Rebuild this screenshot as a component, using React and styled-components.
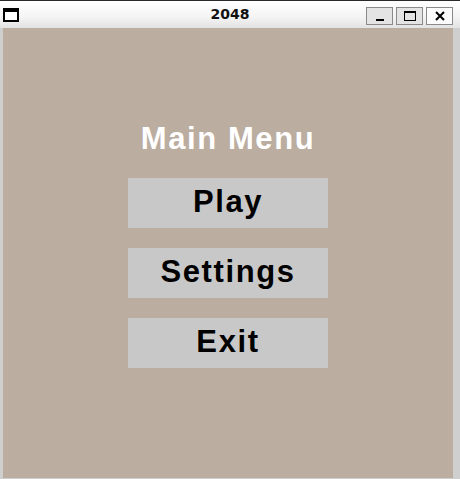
import React from "react";
import styled, { createGlobalStyle } from "styled-components";

const GlobalStyle = createGlobalStyle`
  html, body {
    margin: 0;
    padding: 0;
    background: #cfcfcf;
  }
`;

const menuItems = ["Play", "Settings", "Exit"];

const App = () => {
  return (
    <>
      <GlobalStyle />
      <Window>
        <TitleBar>
          <AppIcon />
          <WindowTitle>2048</WindowTitle>
          <Controls>
            <CtrlButton>
              <svg width="12" height="12" viewBox="0 0 12 12">
                <rect x="2" y="9" width="8" height="2" fill="#000" />
              </svg>
            </CtrlButton>
            <CtrlButton>
              <svg width="14" height="12" viewBox="0 0 14 12">
                <rect x="1.5" y="1.5" width="11" height="9" fill="none" stroke="#000" />
                <rect x="1" y="1" width="12" height="2" fill="#000" />
              </svg>
            </CtrlButton>
            <CtrlButton $light>
              <svg width="12" height="12" viewBox="0 0 12 12">
                <path d="M2 2 L10 10 M10 2 L2 10" stroke="#000" strokeWidth="2" />
              </svg>
            </CtrlButton>
          </Controls>
        </TitleBar>
        <Body>
          <Heading>Main Menu</Heading>
          <Menu>
            {menuItems.map((item) => (
              <MenuButton key={item}>{item}</MenuButton>
            ))}
          </Menu>
        </Body>
      </Window>
    </>
  );
};

export default App;

const Window = styled.div`
  width: 460px;
  height: 479px;
  display: flex;
  flex-direction: column;
  box-sizing: border-box;
  border-top: 1px solid #2a2a2a;
  background: #cfcfcf;
  font-family: "DejaVu Sans", sans-serif;
`;

const TitleBar = styled.div`
  height: 27px;
  display: flex;
  align-items: center;
  position: relative;
  padding: 0 7px 0 3px;
  background: linear-gradient(#ffffff, #f4f4f4 60%, #e2e2e2);
`;

const AppIcon = styled.div`
  width: 12px;
  height: 8px;
  border: 2px solid #000;
  border-top-width: 4px;
  background: #fff;
  margin-top: 1px;
`;

const WindowTitle = styled.div`
  position: absolute;
  left: 0;
  right: 0;
  top: 5px;
  text-align: center;
  font-size: 14px;
  font-weight: bold;
  color: #111;
  pointer-events: none;
`;

const Controls = styled.div`
  margin-left: auto;
  display: flex;
  gap: 3px;
  margin-top: 2px;
`;

const CtrlButton = styled.div`
  width: 25px;
  height: 16px;
  box-sizing: content-box;
  border: 1px solid #8a8a8a;
  background: ${(p) => (p.$light ? "#fbfbfb" : "#e4e4e4")};
  display: flex;
  align-items: center;
  justify-content: center;
`;

const Body = styled.div`
  flex: 1;
  margin: 0 7px 1px 3px;
  background: #bbada0;
  display: flex;
  flex-direction: column;
  align-items: center;
`;

const Heading = styled.h1`
  margin: 93px 0 21px;
  height: 36px;
  line-height: 36px;
  font-family: "Liberation Sans", Arial, sans-serif;
  font-size: 31px;
  font-weight: bold;
  letter-spacing: 1.6px;
  color: #ffffff;
`;

const Menu = styled.div`
  display: flex;
  flex-direction: column;
  gap: 20px;
`;

const MenuButton = styled.div`
  width: 200px;
  height: 50px;
  box-sizing: border-box;
  padding-bottom: 3px;
  display: flex;
  align-items: center;
  justify-content: center;
  background: #c8c8c8;
  font-family: "Liberation Sans", Arial, sans-serif;
  font-size: 31px;
  font-weight: bold;
  letter-spacing: 1.6px;
  color: #000;
`;
